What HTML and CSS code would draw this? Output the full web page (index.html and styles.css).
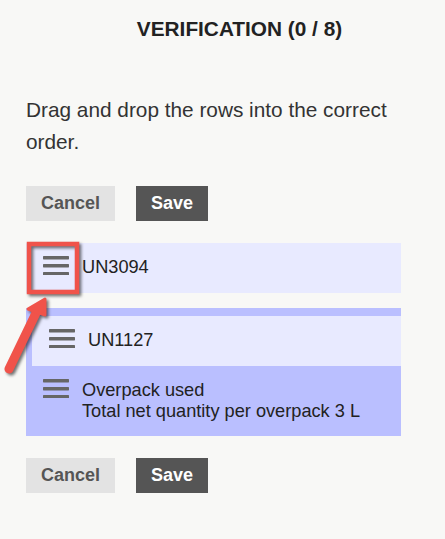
FILE: index.html
```html
<!DOCTYPE html>
<html lang="en">
<head>
  <meta charset="UTF-8">
  <meta name="viewport" content="width=device-width, initial-scale=1.0">
  <title>Verification</title>
  <link rel="stylesheet" href="styles.css">
</head>
<body>
  <div class="page">
    <h1 class="title">VERIFICATION (0 / 8)</h1>

    <p class="intro">Drag and drop the rows into the correct order.</p>

    <div class="actions">
      <button class="btn btn-cancel">Cancel</button>
      <button class="btn btn-save">Save</button>
    </div>

    <div class="list">
      <div class="row">
        <svg class="handle" viewBox="0 0 26 19"><rect x="0" y="0" width="26" height="3.4" rx="0.6"/><rect x="0" y="8" width="26" height="3.4" rx="0.6"/><rect x="0" y="16" width="26" height="3.4" rx="0.6"/></svg>
        <div class="row-text">UN3094</div>
      </div>

      <div class="group">
        <div class="row row-inner">
          <svg class="handle" viewBox="0 0 26 19"><rect x="0" y="0" width="26" height="3.4" rx="0.6"/><rect x="0" y="8" width="26" height="3.4" rx="0.6"/><rect x="0" y="16" width="26" height="3.4" rx="0.6"/></svg>
          <div class="row-text">UN1127</div>
        </div>
        <div class="row row-plain">
          <svg class="handle" viewBox="0 0 26 19"><rect x="0" y="0" width="26" height="3.4" rx="0.6"/><rect x="0" y="8" width="26" height="3.4" rx="0.6"/><rect x="0" y="16" width="26" height="3.4" rx="0.6"/></svg>
          <div class="row-text">Overpack used<br>Total net quantity per overpack 3 L</div>
        </div>
      </div>
    </div>

    <div class="actions actions-bottom">
      <button class="btn btn-cancel">Cancel</button>
      <button class="btn btn-save">Save</button>
    </div>

    <!-- screenshot annotation: box round the drag handle + arrow -->
    <svg class="annot" viewBox="0 0 445 539">
      <rect x="29" y="244" width="48" height="48" fill="none" stroke="#f0534a" stroke-width="4.5"/>
      <line x1="9" y1="369" x2="36" y2="313" stroke="#f0534a" stroke-width="9" stroke-linecap="round"/>
      <polygon points="45,299 28,309 45,315" fill="#f0534a" stroke="#f0534a" stroke-width="3" stroke-linejoin="round"/>
    </svg>
  </div>
</body>
</html>
```

FILE: styles.css
```css
html, body {
  margin: 0;
  background-color: #f8f8f6;
}
body {
  font-family: "Liberation Sans", Arial, sans-serif;
  color: #333;
}
.page {
  position: relative;
  width: 445px;
  height: 539px;
  overflow: hidden;
}
.title {
  margin: 0;
  padding: 17px 0 0 34px;
  font-size: 20.8px;
  line-height: 24px;
  font-weight: bold;
  text-align: center;
  color: #222;
}
.intro {
  margin: 53px 0 0 26px;
  width: 380px;
  font-size: 20.8px;
  line-height: 32px;
  color: #333;
}
.actions {
  display: flex;
  gap: 21px;
  margin: 28px 0 0 26px;
}
.actions-bottom {
  margin-top: 22px;
}
.btn {
  font-family: inherit;
  font-size: 18px;
  font-weight: bold;
  height: 35px;
  padding: 0 15px;
  border: none;
  border-radius: 0;
  cursor: pointer;
}
.btn-cancel {
  background-color: #e3e3e3;
  color: #555;
}
.btn-save {
  background-color: #555;
  color: #fff;
}
.list {
  margin: 22px 0 0 26px;
  width: 375px;
}
.row {
  display: flex;
  align-items: flex-start;
  gap: 13px;
  box-sizing: border-box;
  min-height: 50px;
  padding: 14px 0 14px 17px;
  background-color: #e8eaff;
  font-size: 18.2px;
  line-height: 21px;
  color: #222;
}
.handle {
  flex: none;
  width: 26px;
  height: 19px;
  margin-top: -1px;
  fill: #666;
}
.group {
  margin-top: 15px;
  padding: 8px 0 0 6px;
  background-color: #babfff;
}
.row-plain {
  margin-left: -6px;
  background-color: transparent;
}
.annot {
  position: absolute;
  top: 0;
  left: 0;
  width: 445px;
  height: 539px;
  pointer-events: none;
  filter: drop-shadow(2px 2px 1.5px rgba(0, 0, 0, 0.55));
}
```
